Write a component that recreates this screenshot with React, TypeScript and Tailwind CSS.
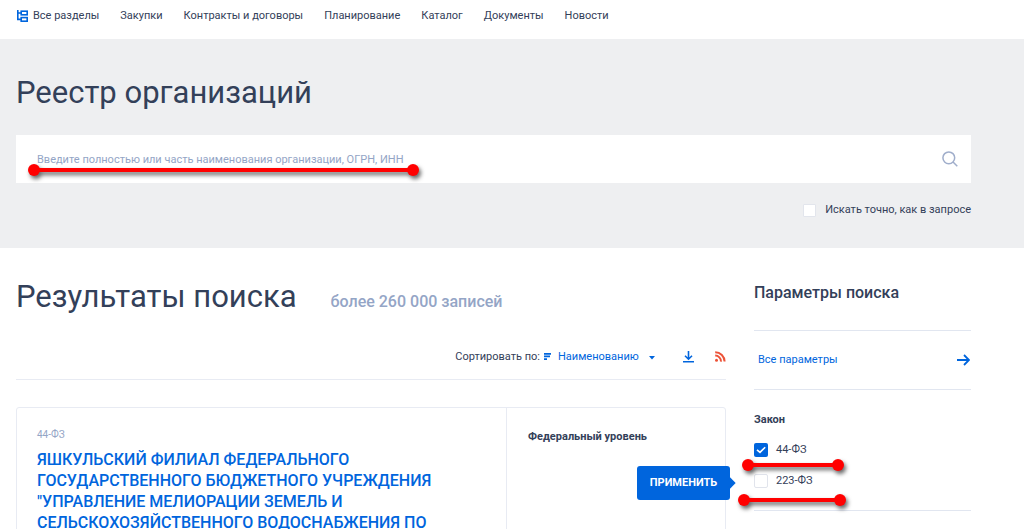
import React from 'react';

const NAV_ITEMS = ['Закупки', 'Контракты и договоры', 'Планирование', 'Каталог', 'Документы', 'Новости'];

interface MarkerProps {
  className: string;
}

// Red underline with a dot on each end
function Marker({ className }: MarkerProps) {
  return (
    <div
      aria-hidden="true"
      className={`pointer-events-none absolute z-20 flex h-3 items-center justify-between drop-shadow-[2px_3px_2px_rgba(0,0,0,0.6)] ${className}`}
    >
      <span className="size-3 shrink-0 rounded-full bg-[#ff0000]" />
      <span className="-mx-1 h-1 grow bg-[#ff0000]" />
      <span className="size-3 shrink-0 rounded-full bg-[#ff0000]" />
    </div>
  );
}

function SectionsIcon() {
  return (
    <svg width="11" height="12" viewBox="0 0 11 12" fill="none" stroke="#0065dd" strokeWidth="1.6" aria-hidden="true">
      <path d="M0.8 0V9.4H4M0.8 3H4" />
      <rect x="4.2" y="1.2" width="6" height="3.6" />
      <rect x="4.2" y="7.6" width="6" height="3.6" />
    </svg>
  );
}

function Header() {
  return (
    <header className="flex h-[39px] items-start pt-[9px] pl-[17px]">
      <nav className="flex gap-[21px] text-[11px] leading-[14px] text-[#334059]">
        <a href="#" className="flex items-center gap-[5px]">
          <SectionsIcon />
          Все разделы
        </a>
        {NAV_ITEMS.map((item) => (
          <a key={item} href="#">
            {item}
          </a>
        ))}
      </nav>
    </header>
  );
}

function SearchBlock() {
  return (
    <section className="bg-[#eeeff1] pt-[34px] pr-[53px] pb-[31px] pl-4">
      <h1 className="text-[31px] leading-[40px] text-[#334059]">Реестр организаций</h1>
      <form className="relative mt-[22px] flex h-12 items-center bg-white pr-[13px] pl-[21px]">
        <input
          type="text"
          aria-label="Поиск организации"
          placeholder="Введите полностью или часть наименования организации, ОГРН, ИНН"
          className="h-full grow text-[11px] outline-none placeholder:text-[#94a5c6]"
        />
        <button type="button" aria-label="Найти">
          <svg width="16" height="16" viewBox="0 0 16 16" fill="none" stroke="#a0aecb" strokeWidth="1.5" aria-hidden="true">
            <circle cx="6.8" cy="6.8" r="5.9" />
            <path d="M11 11L15.3 15.3" />
          </svg>
        </button>
        <Marker className="top-[29px] left-3 w-[391px]" />
      </form>
      <label className="mt-5 flex items-center justify-end gap-[9px] text-[11px] leading-[14px] text-[#334059]">
        <input type="checkbox" className="size-[13px] appearance-none rounded-[1px] border border-[#e2e5ec] bg-white" />
        Искать точно, как в запросе
      </label>
    </section>
  );
}

function SortBar() {
  return (
    <div className="mt-[33px] flex h-[30px] items-start justify-end border-b border-[#e8ebf3] text-[11px] leading-[14px]">
      <label htmlFor="sort" className="text-[#334059]">
        Сортировать по:
      </label>
      <svg className="mt-[3px] ml-1 shrink-0" width="8" height="7" viewBox="0 0 8 7" fill="#0065dd" aria-hidden="true">
        <path d="M0 0H7V1.7H0ZM0 2.6H6V4.3H0ZM0 5.2H3V6.9H0Z" />
      </svg>
      <div className="relative ml-[6px]">
        <select id="sort" className="w-[97px] appearance-none text-[#0065dd] outline-none">
          <option>Наименованию</option>
        </select>
        <svg className="pointer-events-none absolute top-[6px] right-0" width="6" height="4" viewBox="0 0 6 4" fill="#0065dd" aria-hidden="true">
          <path d="M0 0H6L3 3.5Z" />
        </svg>
      </div>
      <button type="button" aria-label="Скачать" className="mt-px ml-7">
        <svg width="11" height="12" viewBox="0 0 11 12" fill="none" stroke="#0065dd" strokeWidth="1.6" aria-hidden="true">
          <path d="M5.5 0V8M2 4.8L5.5 8.2L9 4.8M0 10.8H11" />
        </svg>
      </button>
      <button type="button" aria-label="RSS" className="mt-px ml-[21px]">
        <svg width="11" height="11" viewBox="0 0 11 11" fill="none" stroke="#ed5338" strokeWidth="2" aria-hidden="true">
          <circle cx="1.5" cy="9.3" r="1.5" fill="#ed5338" stroke="none" />
          <path d="M0.2 4.6A5.8 5.8 0 0 1 6 10.6M0.2 1.2A9.4 9.4 0 0 1 9.6 10.6" />
        </svg>
      </button>
    </div>
  );
}

function ResultCard() {
  return (
    <article className="mt-[27px] flex min-h-[180px] rounded-[3px] border border-[#e8ebf3]">
      <div className="flex-1 pt-[21px] pl-5">
        <div className="text-[10px] leading-[12px] text-[#94a5c6]">44-ФЗ</div>
        <a href="#" className="mt-2 block text-[16px] leading-[21px] font-medium text-[#0065dd]">
          ЯШКУЛЬСКИЙ ФИЛИАЛ ФЕДЕРАЛЬНОГО
          <br />
          ГОСУДАРСТВЕННОГО БЮДЖЕТНОГО УЧРЕЖДЕНИЯ
          <br />
          "УПРАВЛЕНИЕ МЕЛИОРАЦИИ ЗЕМЕЛЬ И
          <br />
          СЕЛЬСКОХОЗЯЙСТВЕННОГО ВОДОСНАБЖЕНИЯ ПО
        </a>
      </div>
      <div className="w-[219px] border-l border-[#e8ebf3] pt-[22px] pl-[21px] text-[11px] leading-[14px] font-bold text-[#334059]">
        Федеральный уровень
      </div>
    </article>
  );
}

function Filters() {
  return (
    <aside className="w-[217px] shrink-0 pt-[35px] text-[#334059]">
      <h2 className="text-[16px] leading-5 font-medium">Параметры поиска</h2>
      <a
        href="#"
        className="mt-[27px] flex h-[60px] items-center justify-between border-y border-[#e1e6f0] pr-px pl-1 text-[11px] text-[#0065dd]"
      >
        Все параметры
        <svg width="13" height="12" viewBox="0 0 13 12" fill="none" stroke="#0065dd" strokeWidth="1.8" aria-hidden="true">
          <path d="M0 6H12M7 1L12 6L7 11" />
        </svg>
      </a>
      <fieldset className="relative flex flex-col border-b border-[#e1e6f0] pt-[23px] pb-[22px] text-[11px] leading-[14px]">
        <legend className="float-left w-full font-bold">Закон</legend>
        <label className="mt-4 flex items-center gap-2">
          <span className="relative flex size-[14px]">
            <input type="checkbox" defaultChecked className="size-[14px] appearance-none rounded-[2px] bg-[#0065dd]" />
            <svg className="pointer-events-none absolute inset-0" width="14" height="14" viewBox="0 0 14 14" fill="none" stroke="white" strokeWidth="1.6" aria-hidden="true">
              <path d="M3 6.8L6 9.4L11.2 4.2" />
            </svg>
          </span>
          44-ФЗ
        </label>
        <label className="mt-[17px] flex items-center gap-2">
          <input type="checkbox" className="size-[14px] appearance-none rounded-[2px] border border-[#e1e4ec] bg-white" />
          223-ФЗ
        </label>
        <Marker className="top-[69px] -left-3 w-[102px]" />
        <Marker className="top-[104px] -left-4 w-[108px]" />
        <button
          type="button"
          className="absolute top-[76px] -left-[117px] h-[34px] w-[93px] rounded-[3px] bg-[#0065dd] text-[11px] font-bold text-white"
        >
          ПРИМЕНИТЬ
          <span className="absolute top-[13px] -right-1 size-2 rotate-45 bg-[#0065dd]" />
        </button>
      </fieldset>
    </aside>
  );
}

export default function App() {
  return (
    <div className="h-screen overflow-hidden bg-white font-['Roboto',sans-serif]">
      <Header />
      <SearchBlock />
      <main className="flex gap-7 pr-[53px] pl-4">
        <div className="min-w-0 flex-1 pt-[29px]">
          <div className="flex items-baseline gap-[34px]">
            <h2 className="text-[31px] leading-[40px] text-[#334059]">Результаты поиска</h2>
            <span className="text-[16px] font-medium text-[#94a5c6]">более 260 000 записей</span>
          </div>
          <SortBar />
          <ResultCard />
        </div>
        <Filters />
      </main>
    </div>
  );
}
